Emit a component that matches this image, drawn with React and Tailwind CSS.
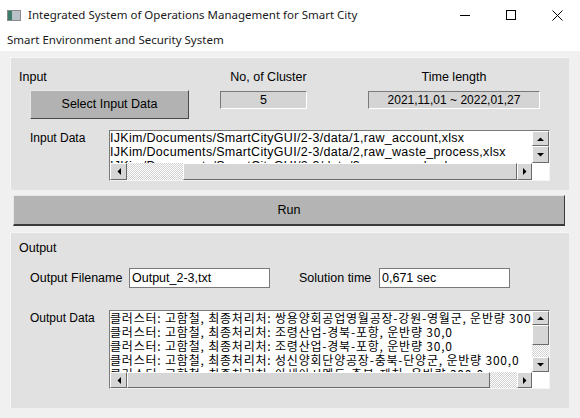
import React from "react";

function ScrollBtn({ dir, className = "" }) {
  const vertical = dir === "up" || dir === "down";
  const pts = {
    up: "0,4 3.5,0.5 7,4",
    down: "0,0 7,0 3.5,3.5",
    left: "4,0 4,7 0.5,3.5",
    right: "0,0 0,7 3.5,3.5",
  }[dir];
  return (
    <div
      className={`flex items-center justify-center bg-[#d6d6d6] border border-t-white border-l-white border-r-[#6a6a6a] border-b-[#6a6a6a] ${className}`}
    >
      <svg width={vertical ? 7 : 4} height={vertical ? 4 : 7} viewBox={vertical ? "0 0 7 4" : "0 0 4 7"}>
        <polygon points={pts} fill="#000" />
      </svg>
    </div>
  );
}

const inputLines = [
  "IJKim/Documents/SmartCityGUI/2-3/data/1,raw_account,xlsx",
  "IJKim/Documents/SmartCityGUI/2-3/data/2,raw_waste_process,xlsx",
  "IJKim/Documents/SmartCityGUI/2-3/data/3,raw_sample,xlsx",
];

const outputLines = [
  "클러스터: 고함철, 최종처리처: 쌍용양회공업영월공장-강원-영월군, 운반량 300,0",
  "클러스터: 고함철, 최종처리처: 조령산업-경북-포항, 운반량 30,0",
  "클러스터: 고함철, 최종처리처: 조령산업-경북-포항, 운반량 30,0",
  "클러스터: 고함철, 최종처리처: 성신양회단양공장-충북-단양군, 운반량 300,0",
  "클러스터: 고함철, 최종처리처: 아세아시멘트-충북-제천, 운반량 300,0",
];

export default function App() {
  return (
    <div className="w-[580px] h-[418px] overflow-hidden bg-[#f0f0f0] text-black font-['Liberation_Sans','Noto_Sans_CJK_KR',sans-serif]">
      {/* Title bar */}
      <div className="h-[30px] bg-white flex items-center">
        <div className="ml-[7px] w-[14px] h-[11px] border border-[#8a8a8a] bg-[#c8c8c8] flex">
          <div className="w-[4px] bg-[#3c7a6a]" />
          <div className="flex-1 bg-[#b9c0c8]" />
        </div>
        <div className="ml-[7px] text-[11.5px] text-[#1a1a1a] font-['Noto_Sans',sans-serif]">
          Integrated System of Operations Management for Smart City
        </div>
        <div className="ml-auto flex items-center h-full">
          <div className="w-[46px] h-full flex items-center justify-center">
            <div className="w-[10px] h-px bg-black" />
          </div>
          <div className="w-[46px] h-full flex items-center justify-center">
            <div className="w-[10px] h-[10px] border border-black" />
          </div>
          <div className="w-[46px] h-full flex items-center justify-center">
            <svg width="11" height="11" viewBox="0 0 11 11">
              <path d="M0.5 0.5 L10.5 10.5 M10.5 0.5 L0.5 10.5" stroke="#000" strokeWidth="1" />
            </svg>
          </div>
        </div>
      </div>

      {/* Menu / subtitle */}
      <div className="h-[21px] bg-white px-[7px] text-[11.5px] leading-[19px] font-['Noto_Sans',sans-serif] text-[#1a1a1a]">
        Smart Environment and Security System
      </div>

      <div className="pl-[10px] pt-[6px]">
        {/* Input panel */}
        <div className="w-[559px] h-[133px] bg-[#e1e1e1] border-t border-l border-t-[#f6f6f6] border-l-[#f6f6f6] pl-[8px] pt-[11px] text-[12.5px]">
          <div className="flex">
            <div className="w-[201px]">
              <div className="h-[16px] leading-[16px]">Input</div>
              <button className="mt-[5px] ml-[11px] w-[159px] h-[29px] bg-[#b2b2b2] border border-t-[#e8e8e8] border-l-[#e8e8e8] border-r-[#4a4a4a] border-b-[#4a4a4a] text-[12.5px]">
                Select Input Data
              </button>
            </div>
            <div className="w-[87px]">
              <div className="h-[16px] leading-[16px] text-center pl-[10px] whitespace-nowrap">No, of Cluster</div>
              <div className="mt-[6px] h-[18px] bg-[#d4d4d4] border border-t-[#7a7a7a] border-l-[#7a7a7a] border-r-white border-b-white text-center leading-[16px]">
                5
              </div>
            </div>
            <div className="ml-[61px] w-[172px]">
              <div className="h-[16px] leading-[16px] text-center">Time length</div>
              <div className="mt-[6px] h-[18px] bg-[#d4d4d4] border border-t-[#7a7a7a] border-l-[#7a7a7a] border-r-white border-b-white text-center leading-[16px] text-[12px]">
                2021,11,01 ~ 2022,01,27
              </div>
            </div>
          </div>

          <div className="flex mt-[11px]">
            <div className="ml-[11px] w-[79px] pt-[1px] leading-[14px] text-[12px]">Input Data</div>
            <div className="w-[441px] h-[51px] border border-t-[#7a7a7a] border-l-[#7a7a7a] border-r-[#f4f4f4] border-b-[#f4f4f4] flex flex-col">
              <div className="flex h-[32px]">
                <div className="flex-1 bg-white overflow-hidden text-[12.5px] leading-[14px] tracking-[0.3px] whitespace-nowrap">
                  {inputLines.map((l) => (
                    <div key={l}>{l}</div>
                  ))}
                </div>
                <div className="w-[17px] flex flex-col">
                  <ScrollBtn dir="up" className="h-[15px]" />
                  <ScrollBtn dir="down" className="flex-1" />
                </div>
              </div>
              <div className="flex flex-1">
                <ScrollBtn dir="left" className="w-[17px]" />
                <div className="w-[56px] bg-[image:repeating-conic-gradient(#d2d2d2_0_25%,#ffffff_0_50%)] bg-[length:2px_2px]" />
                <div className="flex-1 bg-[#d6d6d6] border border-t-white border-l-white border-r-[#6a6a6a] border-b-[#6a6a6a]" />
                <ScrollBtn dir="right" className="w-[15px]" />
                <div className="w-[17px] bg-white" />
              </div>
            </div>
          </div>
        </div>

        {/* Run */}
        <button className="mt-[5px] ml-[3px] w-[552px] h-[31px] bg-[#b4b4b4] border border-t-[#e8e8e8] border-l-[#e8e8e8] border-r-[#3a3a3a] border-b-2 border-b-[#3a3a3a] text-[12.5px]">
          Run
        </button>

        {/* Output panel */}
        <div className="mt-[6px] w-[559px] h-[176px] bg-[#e1e1e1] border-t border-l border-t-[#f6f6f6] border-l-[#f6f6f6] pl-[8px] pt-[7px] text-[12.5px]">
          <div className="h-[16px] leading-[16px]">Output</div>

          <div className="flex items-center mt-[12px] h-[20px]">
            <div className="ml-[11px] w-[99px]">Output Filename</div>
            <div className="w-[141px] h-[20px] bg-white border border-[#7a7a7a] pl-[2px] leading-[18px]">
              Output_2-3,txt
            </div>
            <div className="ml-[29px] w-[80px]">Solution time</div>
            <div className="w-[131px] h-[20px] bg-white border border-[#7a7a7a] pl-[2px] leading-[18px]">
              0,671 sec
            </div>
          </div>

          <div className="flex mt-[22px]">
            <div className="ml-[11px] w-[79px] pt-[1px] leading-[14px] text-[12px]">Output Data</div>
            <div className="w-[441px] h-[79px] border border-t-[#7a7a7a] border-l-[#7a7a7a] border-r-[#f4f4f4] border-b-[#f4f4f4] flex flex-col">
              <div className="flex h-[61px]">
                <div className="flex-1 bg-white overflow-hidden text-[12px] leading-[14px] tracking-[0.8px] whitespace-nowrap font-['Noto_Sans_CJK_KR',sans-serif]">
                  {outputLines.map((l, i) => (
                    <div key={i}>{l}</div>
                  ))}
                </div>
                <div className="w-[17px] flex flex-col">
                  <ScrollBtn dir="up" className="h-[14px]" />
                  <div className="h-[20px] bg-[#d6d6d6] border border-t-white border-l-white border-r-[#6a6a6a] border-b-[#6a6a6a]" />
                  <div className="h-[12px] bg-[image:repeating-conic-gradient(#d2d2d2_0_25%,#ffffff_0_50%)] bg-[length:2px_2px]" />
                  <ScrollBtn dir="down" className="flex-1" />
                </div>
              </div>
              <div className="flex flex-1">
                <ScrollBtn dir="left" className="w-[17px]" />
                <div className="flex-1 bg-[#d6d6d6] border border-t-white border-l-white border-r-[#6a6a6a] border-b-[#6a6a6a]" />
                <div className="w-[27px] bg-[image:repeating-conic-gradient(#d2d2d2_0_25%,#ffffff_0_50%)] bg-[length:2px_2px]" />
                <ScrollBtn dir="right" className="w-[15px]" />
                <div className="w-[17px] bg-white" />
              </div>
            </div>
          </div>
        </div>
      </div>
    </div>
  );
}
